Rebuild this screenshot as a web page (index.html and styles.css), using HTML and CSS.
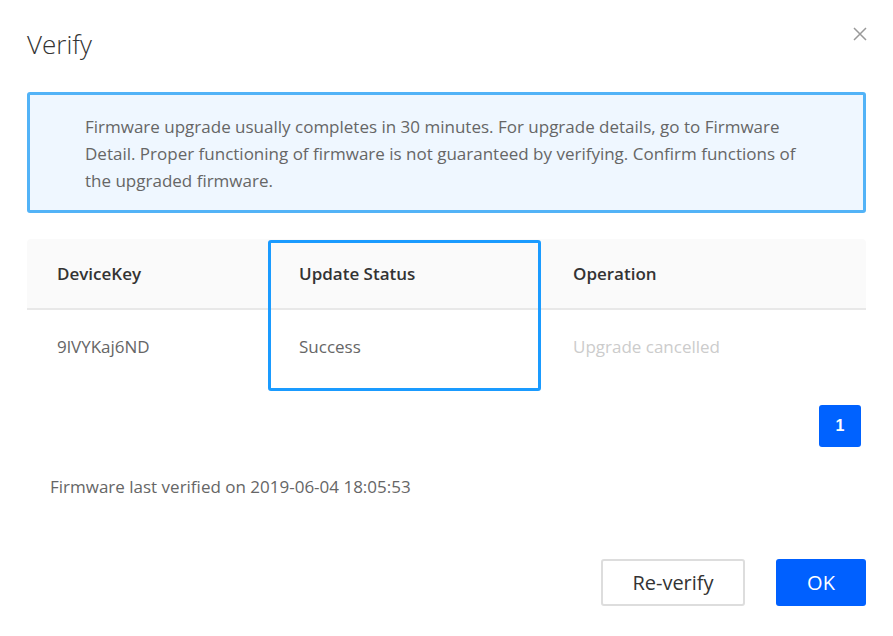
FILE: index.html
```html
<!DOCTYPE html>
<html lang="en">
<head>
<meta charset="utf-8">
<title>Verify</title>
<link rel="stylesheet" href="styles.css">
</head>
<body>
<div class="dialog">
  <div class="dialog-header">
    <h1 class="dialog-title">Verify</h1>
    <button class="close-btn" aria-label="Close">
      <svg width="14" height="14" viewBox="0 0 14 14"><path d="M1 1 L13 13 M13 1 L1 13" stroke="#999" stroke-width="1.5" fill="none"/></svg>
    </button>
  </div>
  <div class="alert">
    <p class="alert-text">Firmware upgrade usually completes in 30 minutes. For upgrade details, go to Firmware Detail. Proper functioning of firmware is not guaranteed by verifying. Confirm functions of the upgraded firmware.</p>
  </div>
  <div class="table-wrap">
    <div class="table">
      <div class="row head">
        <div class="cell c1">DeviceKey</div>
        <div class="cell c2">Update Status</div>
        <div class="cell c3">Operation</div>
      </div>
      <div class="row body">
        <div class="cell c1">9lVYKaj6ND</div>
        <div class="cell c2">Success</div>
        <div class="cell c3 muted">Upgrade cancelled</div>
      </div>
    </div>
    <div class="highlight"></div>
  </div>
  <div class="pager">
    <button class="page active">1</button>
  </div>
  <p class="verified">Firmware last verified on 2019-06-04 18:05:53</p>
  <div class="actions">
    <button class="btn btn-default">Re-verify</button>
    <button class="btn btn-primary">OK</button>
  </div>
</div>
</body>
</html>
```

FILE: styles.css
```css
* { box-sizing: border-box; }
html, body { margin: 0; padding: 0; background: #fff; }
body {
  font-family: "Segoe UI", "Open Sans", "Noto Sans", sans-serif;
  color: #333;
  width: 893px;
  height: 636px;
  overflow: hidden;
}
.dialog { padding: 27px 27px 0 27px; }
.dialog-header {
  display: flex;
  justify-content: space-between;
  align-items: flex-start;
  height: 34px;
}
.dialog-title {
  margin: 0;
  font-size: 26px;
  line-height: 34px;
  font-weight: 300;
  color: #333;
}
.close-btn {
  background: none;
  border: 0;
  padding: 0;
  margin: 0 -1px 0 0;
  width: 14px;
  height: 14px;
  cursor: pointer;
  display: block;
}
.close-btn svg { display: block; }
.alert {
  margin-top: 31px;
  border: 3px solid #52b3f7;
  border-radius: 3px;
  background: #eff7ff;
  padding: 18px 48px 16px 55px;
  height: 121px;
}
.alert-text {
  margin: 0;
  font-size: 17px;
  line-height: 27px;
  color: #666;
}
.table-wrap { position: relative; margin-top: 26px; }
.table { width: 100%; }
.row { display: flex; }
.row.head {
  background: #fafafa;
  height: 71px;
  border-bottom: 2px solid #e8e8e8;
  border-radius: 4px 4px 0 0;
  font-weight: 600;
  color: #333;
}
.row.body { height: 80px; color: #666; padding-bottom: 7px; }
.cell {
  display: flex;
  align-items: center;
  padding-left: 30px;
  font-size: 17px;
}
.c1 { width: 242px; }
.c2 { width: 274px; }
.c3 { flex: 1; }
.muted { color: #ccc; }
.highlight {
  position: absolute;
  left: 241px;
  top: 1px;
  width: 273px;
  height: 151px;
  border: 3px solid #1a9bff;
  border-radius: 3px;
  pointer-events: none;
}
.pager {
  display: flex;
  justify-content: flex-end;
  padding-right: 5px;
  margin-top: 15px;
}
.page {
  width: 42px;
  height: 42px;
  border: 0;
  border-radius: 3px;
  background: #0062ff;
  color: #fff;
  font-family: "Liberation Sans", Arial, sans-serif;
  font-weight: 700;
  font-size: 16px;
  padding: 0;
}
.verified {
  margin: 28px 0 0 23px;
  font-size: 17px;
  line-height: 24px;
  color: #666;
}
.actions {
  display: flex;
  justify-content: flex-end;
  gap: 31px;
  margin-top: 60px;
}
.btn {
  height: 47px;
  border-radius: 3px;
  font-family: inherit;
  font-size: 20px;
  padding: 0;
  cursor: pointer;
}
.btn-default {
  width: 144px;
  background: #fff;
  border: 2px solid #ddd;
  color: #333;
}
.btn-primary {
  width: 90px;
  background: #0060ff;
  border: 0;
  color: #fff;
}
```
